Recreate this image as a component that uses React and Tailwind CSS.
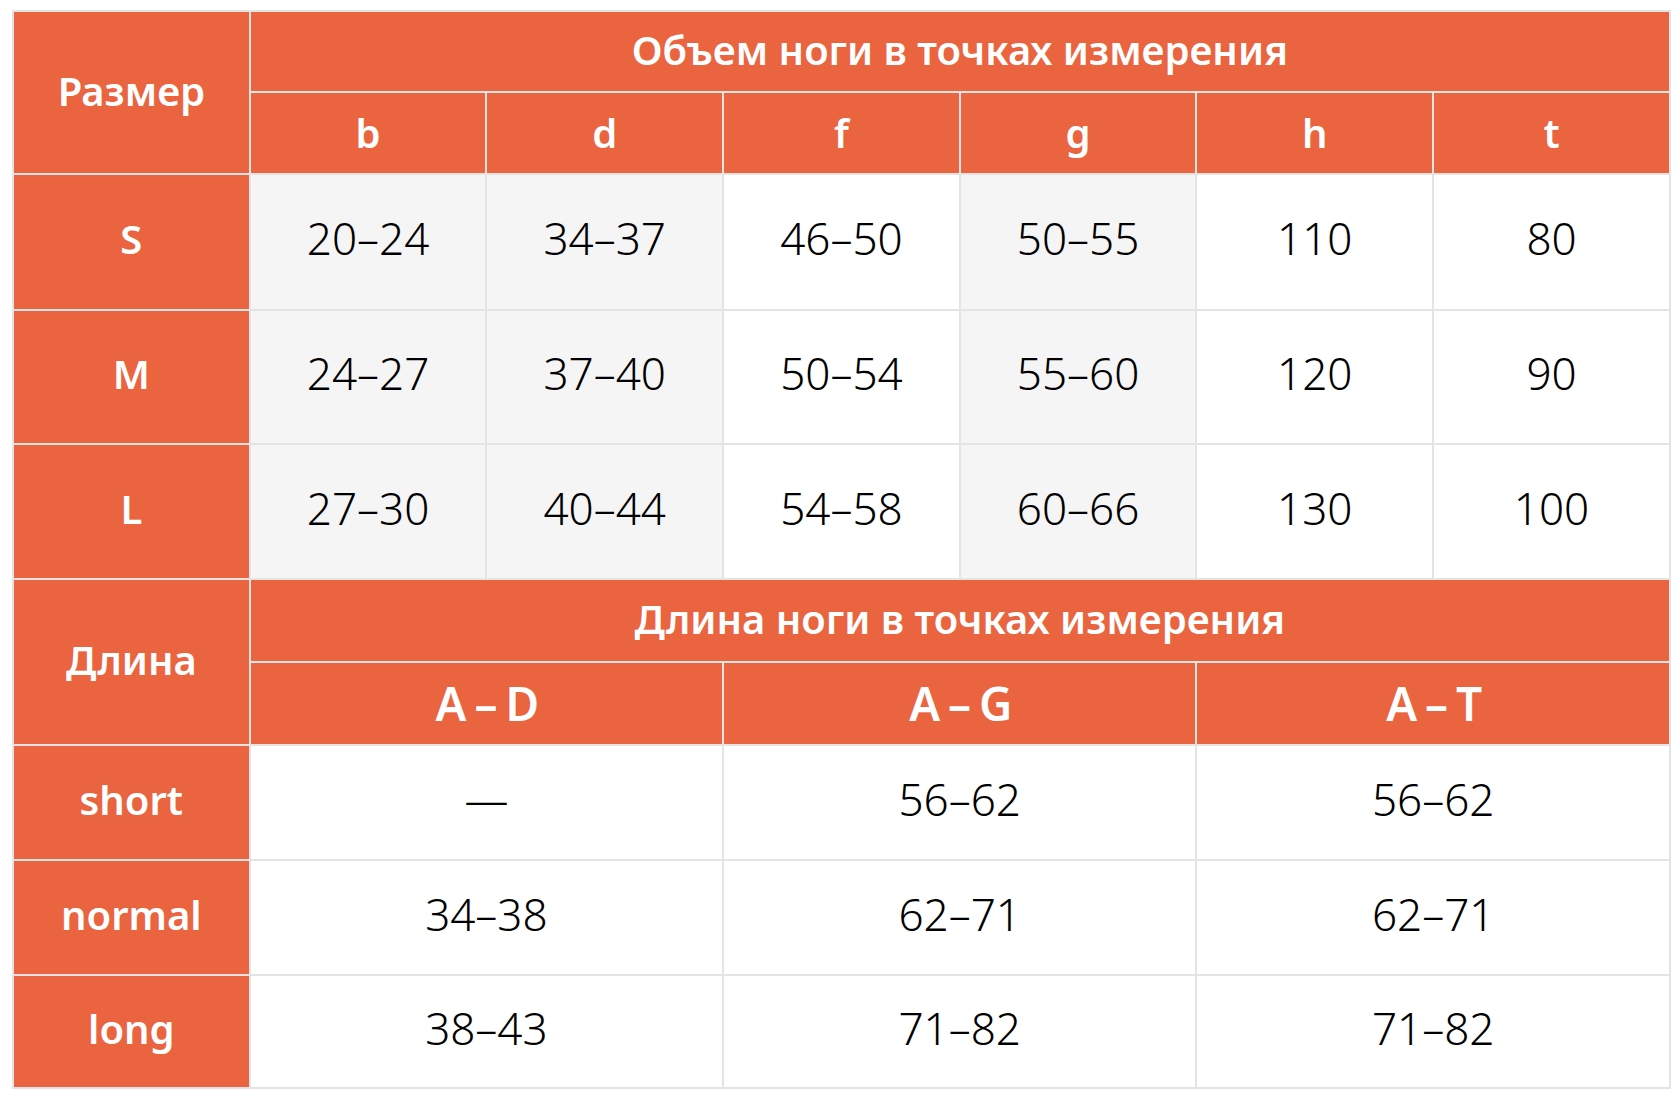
import React from 'react';

const volumeCols = ['b', 'd', 'f', 'g', 'h', 't'];
// b, d, g columns are shaded
const shaded = [true, true, false, true, false, false];

const volumeRows = [
  { size: 'S', h: 'h-[136px]', values: ['20–24', '34–37', '46–50', '50–55', '110', '80'] },
  { size: 'M', h: 'h-[134px]', values: ['24–27', '37–40', '50–54', '55–60', '120', '90'] },
  { size: 'L', h: 'h-[135px]', values: ['27–30', '40–44', '54–58', '60–66', '130', '100'] },
];

const lengthRows = [
  { name: 'short', h: 'h-[115px]', values: ['—', '56–62', '56–62'] },
  { name: 'normal', h: 'h-[115px]', values: ['34–38', '62–71', '62–71'] },
  { name: 'long', h: 'h-[113px]', values: ['38–43', '71–82', '71–82'] },
];

const head = 'bg-[#e9643f] text-white font-semibold text-center align-middle border-2 border-[#e4e4e4]';
const cell = 'text-black text-[44px] font-light text-center align-middle border-2 border-[#e4e4e4] pb-[8px]';

export default function App() {
  return (
    <div className="w-[1680px] h-[1101px] bg-white pt-[10px] pl-[12px] font-['Noto_Sans',sans-serif]">
      <table className="w-[1657px] table-fixed border-collapse">
        <colgroup>
          {[0, 1, 2, 3, 4, 5, 6].map(i => <col key={i} className="w-[236.7px]" />)}
        </colgroup>
        <tbody>
          <tr className="h-[81px]">
            <td rowSpan={2} className={`${head} text-[40px] pb-[4px]`}>Размер</td>
            <td colSpan={6} className={`${head} text-[40px] pb-[4px]`}>Объем ноги в точках измерения</td>
          </tr>
          <tr className="h-[82px]">
            {volumeCols.map(c => (
              <td key={c} className={`${head} text-[40px]`}>{c}</td>
            ))}
          </tr>
          {volumeRows.map(row => (
            <tr key={row.size} className={row.h}>
              <td className={`${head} text-[40px] pb-[6px]`}>{row.size}</td>
              {row.values.map((v, i) => (
                <td key={i} className={`${cell} ${shaded[i] ? 'bg-[#f5f5f5]' : 'bg-white'}`}>{v}</td>
              ))}
            </tr>
          ))}

          <tr className="h-[83px]">
            <td rowSpan={2} className={`${head} text-[40px] pb-[4px]`}>Длина</td>
            <td colSpan={6} className={`${head} text-[40px] pb-[4px]`}>Длина ноги в точках измерения</td>
          </tr>
          <tr className="h-[83px]">
            {['A – D', 'A – G', 'A – T'].map(c => (
              <td key={c} colSpan={2} className={`${head} text-[46px] tracking-[-2px]`}>{c}</td>
            ))}
          </tr>
          {lengthRows.map(row => (
            <tr key={row.name} className={row.h}>
              <td className={`${head} text-[40px] pb-[6px]`}>{row.name}</td>
              {row.values.map((v, i) => (
                <td key={i} colSpan={2} className={`${cell} bg-white`}>{v}</td>
              ))}
            </tr>
          ))}
        </tbody>
      </table>
    </div>
  );
}
